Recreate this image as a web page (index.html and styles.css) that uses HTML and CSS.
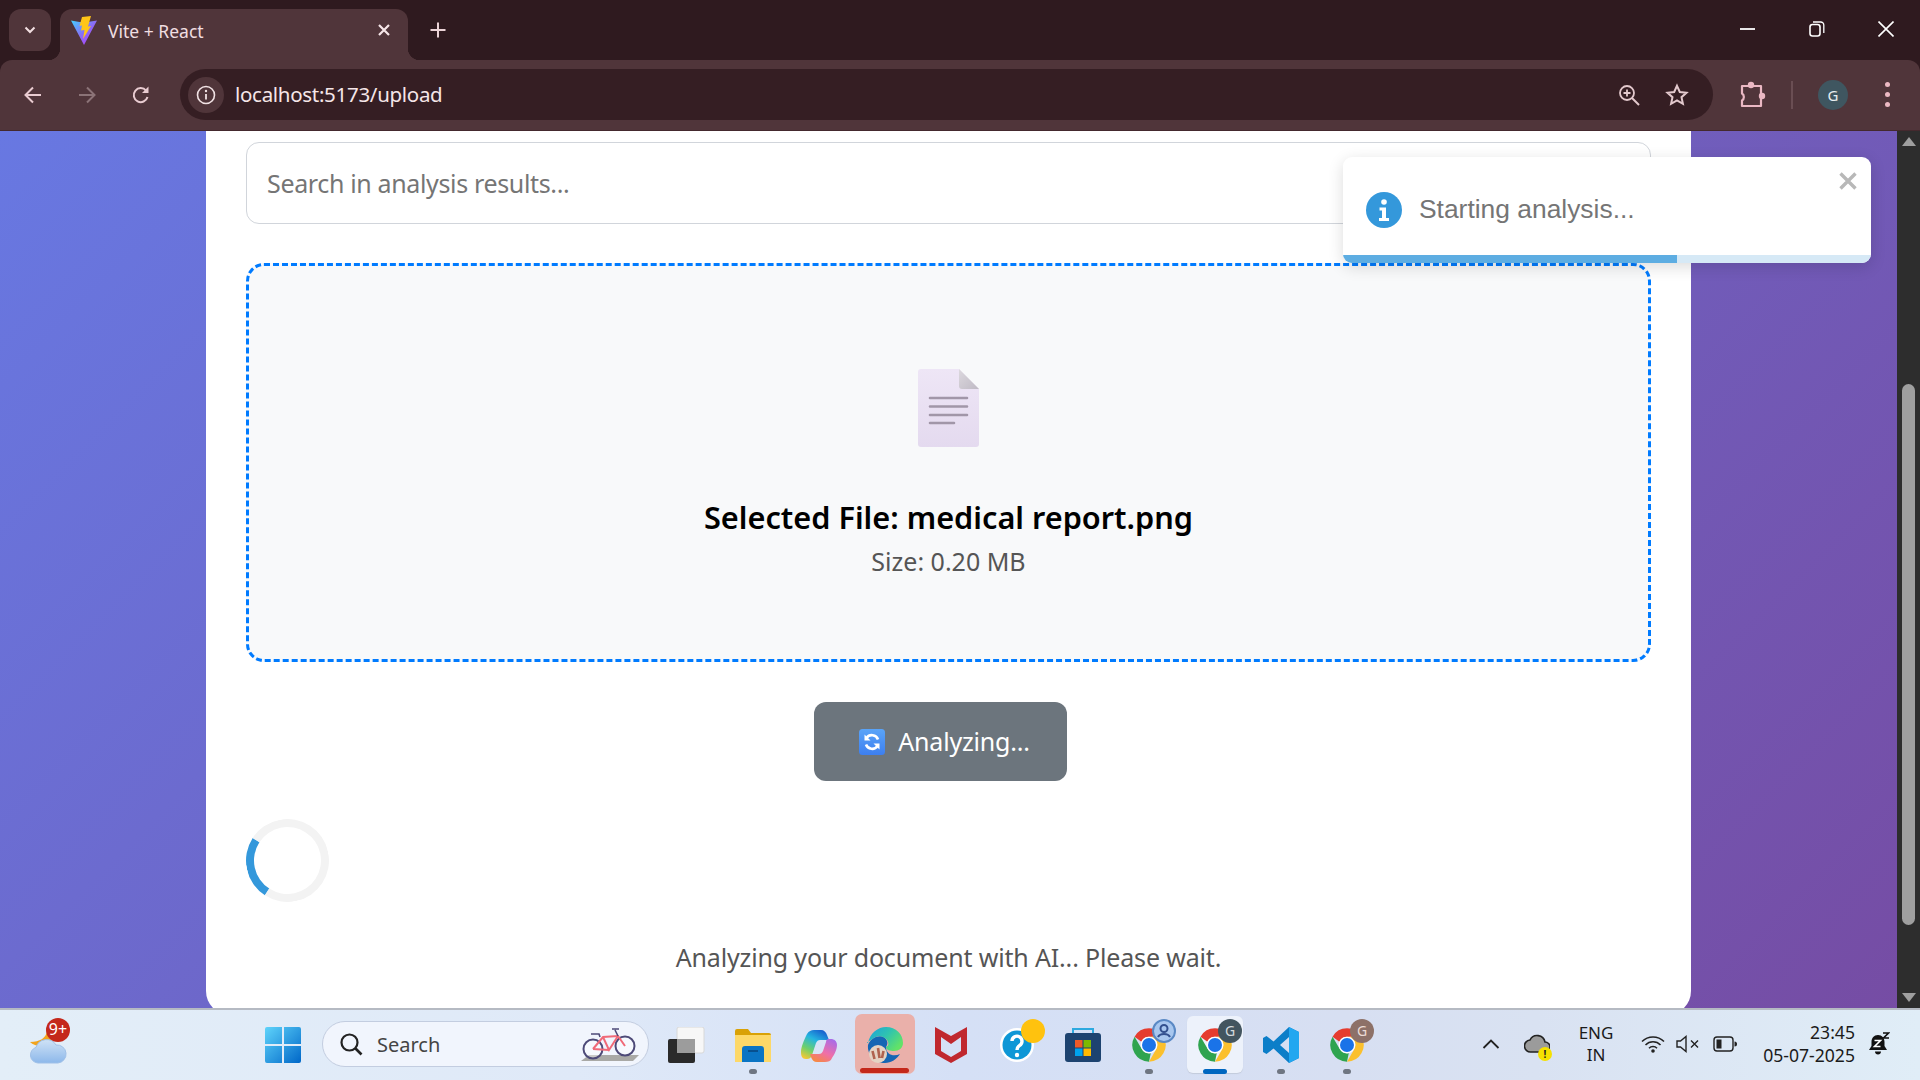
FILE: index.html
```html
<!DOCTYPE html>
<html lang="en">
<head>
<meta charset="utf-8">
<title>Vite + React</title>
<link rel="stylesheet" href="styles.css">
</head>
<body>
<svg class="sprite" width="0" height="0" aria-hidden="true">
  <symbol id="chrome" viewBox="0 0 48 48">
    <path fill="#e53c2f" d="M24 5a19 19 0 0 1 16.5 9.500H24a9.500 9.500 0 0 0-8.700 5.800L7.500 14.500A19 19 0 0 1 24 5z"/>
    <path fill="#2fa44f" d="M7.500 14.500L15.700 28.700A9.500 9.500 0 0 0 26 33.300L24 43A19 19 0 0 1 7.500 14.500z"/>
    <path fill="#fbc02d" d="M40.500 14.500A19 19 0 0 1 24 43l8.200-14.200a9.500 9.500 0 0 0 0-9.600 9.500 9.500 0 0 0-8.200-4.700z"/>
    <circle cx="24" cy="24" r="9.500" fill="#fff"/>
    <circle cx="24" cy="24" r="8" fill="#1a73e8"/>
  </symbol>
</svg>

<header class="tabstrip">
  <div class="tab-search">
    <svg width="14" height="14" viewBox="0 0 14 14"><path d="M2.500 4.500L7 9l4.500-4.500" fill="none" stroke="#f3dfe2" stroke-width="2"/></svg>
  </div>
  <div class="tab">
    <svg class="favicon" width="26" height="30" viewBox="0 0 26 30">
      <defs>
        <linearGradient id="vite" x1="0" y1="0" x2="1" y2="1"><stop offset="0" stop-color="#41d1ff"/><stop offset=".5" stop-color="#8a6cf5"/><stop offset="1" stop-color="#bd34fe"/></linearGradient>
      </defs>
      <path fill="url(#vite)" d="M0 4.500l8.500 1.500 5 0.500 12.500-2L13 29z"/>
      <path fill="#ffc517" d="M11 1l9-1-3 10.500 3-.5-8 13 1.500-9-3.500.5 1-5-2.500.5z"/>
    </svg>
    <span class="tab-title">Vite + React</span>
    <svg class="tab-close" width="14" height="14" viewBox="0 0 14 14"><path d="M2 2l10 10M12 2L2 12" stroke="#f6e6e8" stroke-width="2.200"/></svg>
  </div>
  <div class="new-tab">
    <svg width="18" height="18" viewBox="0 0 18 18"><path d="M9 1.500v15M1.500 9h15" stroke="#ecd3d7" stroke-width="2"/></svg>
  </div>
  <div class="window-controls">
    <div class="win-btn"><svg width="16" height="16" viewBox="0 0 16 16"><path d="M0 8h15" stroke="#fff" stroke-width="1.800"/></svg></div>
    <div class="win-btn"><svg width="16" height="16" viewBox="0 0 16 16"><rect x="1" y="3.500" width="10" height="11.500" rx="2.500" fill="none" stroke="#fff" stroke-width="1.600"/><path d="M4 1h7.500A3 3 0 0 1 14.800 4v8" fill="none" stroke="#fff" stroke-width="1.300"/></svg></div>
    <div class="win-btn"><svg width="16" height="16" viewBox="0 0 16 16"><path d="M0.500 0.500l15 15M15.500 0.500l-15 15" stroke="#fff" stroke-width="1.600"/></svg></div>
  </div>
</header>

<nav class="toolbar">
  <div class="nav-btn"><svg width="20" height="20" viewBox="0 0 20 20"><path d="M18 10H3M10 2.500L2.500 10l7.500 7.500" fill="none" stroke="#e9ccd1" stroke-width="2"/></svg></div>
  <div class="nav-btn"><svg width="20" height="20" viewBox="0 0 20 20"><path d="M2 10h15M10 2.500l7.500 7.500-7.500 7.500" fill="none" stroke="#8b7377" stroke-width="2"/></svg></div>
  <div class="nav-btn"><svg width="20" height="20" viewBox="0 0 20 20"><path d="M16.500 12a7 7 0 1 1-1.400-6.400" fill="none" stroke="#e9ccd1" stroke-width="2"/><path d="M17.500 1.500v6.500H11z" fill="#e9ccd1"/></svg></div>
  <div class="omnibox">
    <div class="site-chip"><svg width="20" height="20" viewBox="0 0 20 20"><circle cx="10" cy="10" r="8.500" fill="none" stroke="#f1e2e4" stroke-width="1.600"/><path d="M10 9v5.500" stroke="#f1e2e4" stroke-width="1.800"/><circle cx="10" cy="6" r="1.200" fill="#f1e2e4"/></svg></div>
    <span class="url">localhost:5173/upload</span>
    <div class="omni-btn"><svg width="22" height="22" viewBox="0 0 22 22"><circle cx="9" cy="9" r="7" fill="none" stroke="#e3c9cd" stroke-width="1.800"/><path d="M14 14l7 7" stroke="#e3c9cd" stroke-width="2"/><path d="M9 5.500v7M5.500 9h7" stroke="#e3c9cd" stroke-width="1.800"/></svg></div>
    <div class="omni-btn"><svg width="24" height="24" viewBox="0 0 24 24"><path d="M12 2.800l2.800 6.200 6.700.7-5 4.500 1.400 6.600L12 17.400l-5.900 3.400 1.400-6.600-5-4.500 6.700-.7z" fill="none" stroke="#e3c9cd" stroke-width="2"/></svg></div>
  </div>
  <div class="ext-btn"><svg width="26" height="27" viewBox="0 0 26 27"><path d="M2 5h19v20H2v-5.500c2.500-1.500 2.500-5.500 0-7z" fill="none" stroke="#eab8c3" stroke-width="2.200" stroke-linejoin="round"/><circle cx="11" cy="4" r="3.200" fill="#eab8c3"/><circle cx="22" cy="15" r="3.200" fill="#eab8c3"/></svg></div>
  <div class="tool-divider"></div>
  <div class="avatar">G</div>
  <div class="menu-btn"><span class="menu-dot"></span><span class="menu-dot"></span><span class="menu-dot"></span></div>
</nav>

<main class="viewport">
  <div class="page">
    <section class="card">
      <div class="search-box"><span class="placeholder">Search in analysis results...</span></div>
      <div class="dropzone">
        <svg class="file-icon" width="61" height="78" viewBox="0 0 61 78">
          <defs>
            <linearGradient id="paper" x1="0" y1="0" x2="0" y2="1"><stop offset="0" stop-color="#eee6f6"/><stop offset="1" stop-color="#e4daef"/></linearGradient>
            <linearGradient id="fold" x1="0" y1="0" x2="1" y2="1"><stop offset="0" stop-color="#dcd8de"/><stop offset="1" stop-color="#bfbac4"/></linearGradient>
          </defs>
          <path fill="url(#paper)" d="M3 0h38l20 20v55a3 3 0 0 1-3 3H3a3 3 0 0 1-3-3V3a3 3 0 0 1 3-3z"/>
          <path fill="url(#fold)" d="M41 0l20 20H44a3 3 0 0 1-3-3z"/>
          <path d="M12 29h37M12 37.500h37M12 46h37M12 54h24" stroke="#a196a8" stroke-width="2.600" stroke-linecap="round"/>
        </svg>
        <h3 class="file-name">Selected File: medical report.png</h3>
        <p class="file-size">Size: 0.20 MB</p>
      </div>
      <div class="action-row">
        <button class="analyze-btn" type="button">
          <svg width="26" height="26" viewBox="0 0 26 26">
            <defs><linearGradient id="emoji" x1="0" y1="0" x2="0" y2="1"><stop offset="0" stop-color="#5aa4f8"/><stop offset="1" stop-color="#3d7ff0"/></linearGradient></defs>
            <rect width="26" height="26" rx="3.500" fill="url(#emoji)"/>
            <path d="M19 10.500a6.500 6.500 0 0 0-11.500-1.500" fill="none" stroke="#fff" stroke-width="2.600"/>
            <path d="M5.500 5.500v6h6z" fill="#fff"/>
            <path d="M7 15.500a6.500 6.500 0 0 0 11.500 1.500" fill="none" stroke="#fff" stroke-width="2.600"/>
            <path d="M20.500 20.500v-6h-6z" fill="#fff"/>
          </svg>
          <span>Analyzing...</span>
        </button>
      </div>
      <div class="spinner"></div>
      <p class="status">Analyzing your document with AI... Please wait.</p>
    </section>
  </div>
  <aside class="scrollbar">
    <span class="arrow-up"></span>
    <span class="thumb"></span>
    <span class="arrow-down"></span>
  </aside>
  <div class="toast">
    <div class="toast-body">
      <svg width="36" height="36" viewBox="0 0 36 36"><circle cx="18" cy="18" r="18" fill="#3498db"/><circle cx="18" cy="10" r="2.800" fill="#fff"/><path d="M13.500 15.500h6.500v10.500h3v3h-10v-3h3v-7.500h-2.500z" fill="#fff"/></svg>
      <span class="toast-text">Starting analysis...</span>
    </div>
    <svg class="toast-close" width="20" height="20" viewBox="0 0 20 20"><path d="M2.500 2.500l15 15M17.500 2.500l-15 15" stroke="#b8b8b8" stroke-width="3.400"/></svg>
    <div class="toast-track"><div class="toast-fill"></div></div>
  </div>
</main>

<footer class="taskbar">
  <div class="weather">
    <svg width="38" height="34" viewBox="0 0 38 34">
      <defs><linearGradient id="cloud" x1="0" y1="0" x2="0" y2="1"><stop offset="0" stop-color="#cfe2f6"/><stop offset="1" stop-color="#8db8ea"/></linearGradient></defs>
      <path d="M18 1c-1 7-7 11-17 11 5 5 16 6 22 0z" fill="#f2a41d"/>
      <path d="M9 33a8 8 0 0 1-2-15.600A11 11 0 0 1 27 15a9 9 0 0 1 2 18z" fill="url(#cloud)" stroke="#9fc0e8"/>
    </svg>
    <span class="weather-badge">9+</span>
  </div>
  <div class="slot start-slot">
    <svg width="36" height="36" viewBox="0 0 36 36">
      <defs><linearGradient id="win" x1="0" y1="0" x2="1" y2="1"><stop offset="0" stop-color="#5fd4fb"/><stop offset="1" stop-color="#0067c8"/></linearGradient></defs>
      <path fill="url(#win)" d="M2 0h15v17H0V2a2 2 0 0 1 2-2zM19 0h15a2 2 0 0 1 2 2v15H19zM0 19h17v17H2a2 2 0 0 1-2-2zM19 19h17v15a2 2 0 0 1-2 2H19z"/>
    </svg>
  </div>
  <div class="task-search">
    <svg width="24" height="24" viewBox="0 0 24 24"><circle cx="10.500" cy="10.500" r="8" fill="none" stroke="#222" stroke-width="2.200"/><path d="M16.500 16.500l6 6" stroke="#222" stroke-width="2.600"/></svg>
    <span class="task-search-text">Search</span>
    <svg class="bike" width="62" height="36" viewBox="0 0 62 36">
      <path d="M2 35l8-6h50l-6 6z" fill="#a9a9a6"/>
      <circle cx="14" cy="23" r="9.500" fill="#fff" fill-opacity=".4" stroke="#4d4a78" stroke-width="2"/>
      <circle cx="46" cy="20" r="9.500" fill="#fff" fill-opacity=".4" stroke="#4d4a78" stroke-width="2"/>
      <path d="M14 23l10-12 15-1 7 10M24 11l6 13 9-14M30 24L14 23" fill="none" stroke="#f06a78" stroke-width="2"/>
      <path d="M12 8h8l1 3M36 4l3 6M33 3h7" fill="none" stroke="#4d4a78" stroke-width="1.600"/>
    </svg>
  </div>
  <div class="slot">
    <svg width="38" height="36" viewBox="0 0 38 36"><rect x="9" y="0" width="27" height="26" rx="2" fill="#f7f7f7" stroke="#d8d8d8"/><rect x="0" y="12" width="27" height="24" rx="2" fill="#2a2a2a"/><rect x="9" y="12" width="18" height="14" fill="#9c9c9c"/></svg>
  </div>
  <div class="slot">
    <svg width="36" height="34" viewBox="0 0 36 34"><path d="M0 3a2 2 0 0 1 2-2h11l3 4h18a2 2 0 0 1 2 2v4H0z" fill="#d9a106"/><path d="M0 7h36v27H0z" fill="#fdd868"/><path d="M7 34V21a3 3 0 0 1 3-3h16a3 3 0 0 1 3 3v13z" fill="#0a74c4"/><path d="M13 23h10" stroke="#07508f" stroke-width="2"/></svg>
    <span class="dot"></span>
  </div>
  <div class="slot">
    <svg width="36" height="33" viewBox="0 0 36 33">
      <defs>
        <linearGradient id="cop1" x1="0.700" y1="0" x2="0.200" y2="1"><stop offset="0" stop-color="#1762cf"/><stop offset=".35" stop-color="#25b5e0"/><stop offset=".7" stop-color="#6fd06a"/><stop offset="1" stop-color="#f2c834"/></linearGradient>
        <linearGradient id="cop2" x1="0.800" y1="0" x2="0.200" y2="1"><stop offset="0" stop-color="#a86be8"/><stop offset=".55" stop-color="#ef6fa8"/><stop offset="1" stop-color="#f68a3c"/></linearGradient>
      </defs>
      <path d="M13 1h7c3 0 5 2 6 5l2 5h-9c-2 0-3 1-4 3l-4 12c-1 3-3 4-5 4H5c-4 0-5-3-5-7 0-5 3-12 6-18 2-3 4-4 7-4z" fill="url(#cop1)"/>
      <path d="M28 10h2c3 0 6 2 6 6 0 5-3 10-5 13-1 3-4 4-7 4h-8c-3 0-5-2-6-5l-1-3h9c2 0 3-1 4-3l3-9c0-2 1-3 3-3z" fill="url(#cop2)"/>
    </svg>
  </div>
  <div class="slot slot-alert">
    <svg width="36" height="36" viewBox="0 0 36 36">
      <defs><linearGradient id="edge" x1="0" y1="0" x2="1" y2="0.600"><stop offset="0" stop-color="#1b9de2"/><stop offset=".55" stop-color="#2fc3b0"/><stop offset="1" stop-color="#62e268"/></linearGradient></defs>
      <path d="M1 18C4 10 13 7 18 11c3 3 3 6 1 9 0 8 8 10 14 7-3 5-9 9-15 9C8 36 0 28 1 18z" fill="#1566b4"/>
      <path d="M1 16C3 6 11 0 19 0c10 0 17 7 17 16 0 5-4 8-9 8-4 0-8-1-8-4 3-1 3-4 1-7-3-4-9-5-13-2-3 2-6 4-8 5z" fill="url(#edge)"/>
      <circle cx="11" cy="27" r="9" fill="#e4d3c4"/>
      <path d="M5.500 24l2 8M11 21l1.500 10M16.500 24l-1.500 7" stroke="#b0634f" stroke-width="2.600"/>
    </svg>
    <span class="alert-bar"></span>
  </div>
  <div class="slot">
    <svg width="32" height="36" viewBox="0 0 32 36"><path d="M0 0l16 9 16-9v27L16 36 0 27zM6 10v14l10 6 10-6V10L16 17z" fill="#c0282e" fill-rule="evenodd"/></svg>
  </div>
  <div class="slot">
    <svg width="34" height="34" viewBox="0 0 34 34"><circle cx="17" cy="17" r="17" fill="#fff"/><circle cx="17" cy="17" r="14.500" fill="#0e97d6"/><path d="M12 13a5 5 0 1 1 7.500 4.500C17.500 19 17 20 17 22" fill="none" stroke="#fff" stroke-width="3.400"/><circle cx="17" cy="27" r="2.200" fill="#fff"/></svg>
    <span class="help-dot"></span>
  </div>
  <div class="slot">
    <svg width="36" height="34" viewBox="0 0 36 34">
      <path d="M8 7V1h20v6" fill="none" stroke="#2ea9df" stroke-width="2"/>
      <rect y="5" width="36" height="29" rx="3" fill="#1d4370"/>
      <rect x="10" y="12" width="7.500" height="7.500" fill="#f05a28"/><rect x="18.500" y="12" width="7.500" height="7.500" fill="#7db900"/><rect x="10" y="20.500" width="7.500" height="7.500" fill="#00a2ed"/><rect x="18.500" y="20.500" width="7.500" height="7.500" fill="#ffb900"/>
    </svg>
  </div>
  <div class="slot">
    <svg class="chrome-icon"><use href="#chrome"/></svg>
    <span class="badge badge-photo">
      <svg width="24" height="24" viewBox="0 0 24 24"><circle cx="12" cy="12" r="11" fill="#a8c7ef" stroke="#5a89c5" stroke-width="2"/><circle cx="12" cy="9.500" r="3.500" fill="none" stroke="#33518f" stroke-width="2"/><path d="M6 18c2-4 10-4 12 0" fill="none" stroke="#33518f" stroke-width="2"/></svg>
    </span>
    <span class="dot"></span>
  </div>
  <div class="slot slot-current">
    <svg class="chrome-icon"><use href="#chrome"/></svg>
    <span class="badge badge-slate">G</span>
    <span class="current-bar"></span>
  </div>
  <div class="slot">
    <svg width="36" height="36" viewBox="0 0 36 36"><path d="M26 0l10 5v26l-10 5L10.500 21.500 3.500 27 0 25V11l3.500-2 7 5.500zM26 10l-9 8 9 8z" fill="#0c7ec8" fill-rule="evenodd"/><path d="M26 0l10 5v26l-10 5z" fill="#22a7f0"/></svg>
    <span class="dot"></span>
  </div>
  <div class="slot">
    <svg class="chrome-icon"><use href="#chrome"/></svg>
    <span class="badge badge-brown">G</span>
    <span class="dot"></span>
  </div>
  <div class="task-spacer"></div>
  <div class="tray-chevron"><svg width="18" height="12" viewBox="0 0 18 12"><path d="M1.500 10L9 2.500 16.500 10" fill="none" stroke="#222" stroke-width="1.800"/></svg></div>
  <div class="tray-cloud">
    <svg width="26" height="20" viewBox="0 0 26 20"><path d="M7 18a6 6 0 0 1-1-12 8 8 0 0 1 15 2 5 5 0 0 1 0 10z" fill="#9b9b9b" stroke="#222" stroke-width="1.600"/></svg>
    <span class="tray-warn">!</span>
  </div>
  <div class="tray-lang"><span>ENG</span><span>IN</span></div>
  <div class="tray-wifi"><svg width="24" height="18" viewBox="0 0 24 18"><path d="M1 6.500a15.500 15.500 0 0 1 22 0M4.500 10a10.500 10.500 0 0 1 15 0M8 13.200a5.500 5.500 0 0 1 8 0" fill="none" stroke="#222" stroke-width="1.500"/><circle cx="12" cy="16" r="1.800" fill="#222"/></svg></div>
  <div class="tray-sound"><svg width="24" height="18" viewBox="0 0 24 18"><path d="M1 6h3.500L10 1.500v15L4.500 12H1z" fill="none" stroke="#222" stroke-width="1.400"/><path d="M15 5.500l7 7M22 5.500l-7 7" stroke="#222" stroke-width="1.400"/></svg></div>
  <div class="tray-battery"><svg width="24" height="16" viewBox="0 0 24 16"><rect x="1" y="1" width="19" height="14" rx="3" fill="none" stroke="#222" stroke-width="1.400"/><rect x="3.500" y="3.500" width="5" height="9" fill="#222"/><path d="M21.500 5.500a2.500 2.500 0 0 1 0 5z" fill="#222"/></svg></div>
  <div class="tray-clock"><span>23:45</span><span>05-07-2025</span></div>
  <div class="tray-bell"><svg width="22" height="24" viewBox="0 0 22 24"><path d="M10 3C6 3 3.500 6 3.500 10v4L1 18h18l-2.500-4v-4C16.500 6 14 3 10 3z" fill="#111"/><path d="M7 19.500h6c0 2-1.300 3-3 3s-3-1-3-3z" fill="#111"/><path d="M6.500 8.500h6l-6 6h6" fill="none" stroke="#fff" stroke-width="1.600"/><path d="M15 1h5.500l-5 5h5.500" fill="none" stroke="#111" stroke-width="1.600"/></svg></div>
</footer>
</body>
</html>
```

FILE: styles.css
```css
* { box-sizing: border-box; }

html, body { height: 100%; }

body {
  margin: 0;
  height: 100vh;
  overflow: hidden;
  display: flex;
  flex-direction: column;
  background: #2f1a1f;
  font-family: "Noto Sans", "Open Sans", sans-serif;
}

.sprite { position: absolute; }

/* tab strip */
.tabstrip {
  height: 60px;
  flex: none;
  display: flex;
  background: #2f1a1f;
}

.tab-search {
  width: 42px;
  height: 42px;
  margin: 9px 0 0 9px;
  border-radius: 12px;
  background: #50353a;
  display: flex;
  align-items: center;
  justify-content: center;
}

.tab {
  position: relative;
  width: 348px;
  height: 51px;
  margin: 9px 0 0 9px;
  padding: 0 17px 0 8px;
  border-radius: 12px 12px 0 0;
  background: #50353a;
  display: flex;
  align-items: flex-start;
}

.tab::before,
.tab::after {
  content: "";
  position: absolute;
  bottom: 0;
  width: 12px;
  height: 12px;
}

.tab::before {
  left: -12px;
  background: radial-gradient(circle at 0 0, transparent 12px, #50353a 12.500px);
}

.tab::after {
  right: -12px;
  background: radial-gradient(circle at 100% 0, transparent 12px, #50353a 12.500px);
}

.favicon { margin: 7px 11px 0 3px; flex: none; }

.tab-title {
  flex: 1;
  margin-top: 11px;
  font-size: 17.500px;
  line-height: 23px;
  color: #f0dee1;
}

.tab-close { margin-top: 14px; }

.new-tab {
  width: 30px;
  height: 30px;
  margin: 15px 0 0 15px;
  display: flex;
  align-items: center;
  justify-content: center;
}

.window-controls { margin-left: auto; display: flex; }

.win-btn {
  width: 69px;
  height: 60px;
  padding-bottom: 2px;
  display: flex;
  align-items: center;
  justify-content: center;
}

/* toolbar */
.toolbar {
  height: 71px;
  flex: none;
  padding-left: 6px;
  display: flex;
  align-items: center;
  padding-bottom: 1px;
  background: #50353a;
  border-bottom: 1px solid #44292e;
  border-radius: 12px 12px 0 0;
}

.nav-btn {
  width: 54px;
  height: 48px;
  display: flex;
  align-items: center;
  justify-content: center;
}

.omnibox {
  width: 1533px;
  height: 51px;
  margin-left: 12px;
  padding: 0 12px 0 8px;
  border-radius: 26px;
  background: #351e23;
  display: flex;
  align-items: center;
}

.site-chip {
  width: 36px;
  height: 36px;
  flex: none;
  border-radius: 50%;
  background: #50353a;
  display: flex;
  align-items: center;
  justify-content: center;
}

.url {
  flex: 1;
  margin: 0 0 2px 11px;
  font-size: 20.500px;
  letter-spacing: -0.3px;
  color: #f5e6e8;
}

.omni-btn {
  width: 48px;
  height: 48px;
  display: flex;
  align-items: center;
  justify-content: center;
}

.ext-btn {
  width: 48px;
  margin-left: 16px;
  display: flex;
  justify-content: center;
}

.tool-divider {
  width: 2px;
  height: 28px;
  margin-left: 14px;
  background: #6a4e53;
}

.avatar {
  width: 30px;
  height: 30px;
  margin-left: 25px;
  border-radius: 50%;
  background: #3f5660;
  color: #e8eef0;
  font-size: 15px;
  line-height: 30px;
  text-align: center;
}

.menu-btn {
  width: 48px;
  margin-left: 15px;
  display: flex;
  flex-direction: column;
  align-items: center;
  gap: 5px;
}

.menu-dot {
  width: 5px;
  height: 5px;
  border-radius: 50%;
  background: #ecb9c3;
}

/* page */
.viewport {
  position: relative;
  flex: 1;
  min-height: 0;
  display: flex;
  overflow: hidden;
}

.page {
  flex: 1;
  min-width: 0;
  padding: 0 206px;
  background-image: linear-gradient(135deg, #667eea, #764ba2);
  background-size: 1897px 1345px;
  background-position: 0 -374px;
}

.card {
  height: 884px;
  padding: 11px 40px 0 40px;
  border-radius: 0 0 24px 24px;
  background: #fff;
}

.search-box {
  height: 82px;
  padding: 0 20px;
  border: 1px solid #d1d5db;
  border-radius: 13px;
  display: flex;
  align-items: center;
}

.placeholder {
  font-size: 25px;
  letter-spacing: -0.35px;
  color: #757575;
}

.dropzone {
  height: 399px;
  margin-top: 39px;
  padding-top: 103px;
  border: 3px dashed #007bff;
  border-radius: 18px;
  background: #f8f9fa;
  display: flex;
  flex-direction: column;
  align-items: center;
}

.file-icon { flex: none; }

.file-name {
  margin: 48px 0 0;
  font-size: 30.700px;
  line-height: 44px;
  font-weight: 600;
  color: #000;
}

.file-size {
  margin: 4px 0 0;
  font-size: 25px;
  line-height: 36px;
  color: #555;
}

.action-row {
  margin-top: 40px;
  padding-right: 16px;
  display: flex;
  justify-content: center;
}

.analyze-btn {
  width: 253px;
  height: 79px;
  padding: 0 0 0 8px;
  border: 0;
  border-radius: 12px;
  background: #6c757d;
  color: #fff;
  font: inherit;
  font-size: 25px;
  letter-spacing: -0.2px;
  display: flex;
  align-items: center;
  justify-content: center;
  gap: 13px;
}

.analyze-btn span { margin-bottom: 2px; }

.spinner {
  width: 83px;
  height: 83px;
  margin-top: 38px;
  border: 8px solid #f3f3f3;
  border-top-color: #3498db;
  border-radius: 50%;
  transform: rotate(258deg);
}

.status {
  margin: 37px 0 0;
  font-size: 25px;
  line-height: 36px;
  letter-spacing: -0.16px;
  text-align: center;
  color: #555;
}

/* scrollbar */
.scrollbar {
  position: relative;
  width: 23px;
  flex: none;
  background: #2d2d2d;
}

.thumb {
  position: absolute;
  left: 5px;
  top: 253px;
  width: 13px;
  height: 541px;
  border-radius: 7px;
  background: #9f9f9f;
}

.arrow-up,
.arrow-down {
  position: absolute;
  left: 5px;
  width: 0;
  height: 0;
  border-left: 7px solid transparent;
  border-right: 7px solid transparent;
}

.arrow-up { top: 6px; border-bottom: 9px solid #9f9f9f; }
.arrow-down { bottom: 6px; border-top: 9px solid #9f9f9f; }

/* toast */
.toast {
  position: absolute;
  left: 1343px;
  top: 26px;
  width: 528px;
  height: 106px;
  border-radius: 9px;
  overflow: hidden;
  background: #fff;
  box-shadow: 0 4px 16px rgba(0, 0, 0, 0.14);
}

.toast-body {
  height: 98px;
  padding: 7px 0 0 23px;
  display: flex;
  align-items: center;
  gap: 17px;
}

.toast-text {
  font-family: "Liberation Sans", Arial, sans-serif;
  font-size: 26.400px;
  color: #757575;
}

.toast-close {
  position: absolute;
  right: 13px;
  top: 14px;
}

.toast-track {
  height: 8px;
  background: #d6e9f6;
}

.toast-fill {
  width: 334px;
  height: 100%;
  background: #5dade2;
}

/* taskbar */
.taskbar {
  height: 72px;
  flex: none;
  display: flex;
  border-top: 2px solid #b5bac3;
  background: linear-gradient(90deg, #e3eef8 0%, #dfe9f8 30%, #d5e0f6 50%, #d7dff2 70%, #d9e2f2 80%, #e0edf7 100%);
}

.weather {
  position: relative;
  width: 96px;
  margin-right: 154px;
  display: flex;
  align-items: center;
  justify-content: center;
  padding: 4px 0 0;
}

.weather-badge {
  position: absolute;
  left: 46px;
  top: 8px;
  width: 24px;
  height: 24px;
  border-radius: 50%;
  background: #c4281b;
  color: #fff;
  font-size: 16px;
  line-height: 23px;
  text-align: center;
}

.slot {
  position: relative;
  width: 66px;
  height: 70px;
  flex: none;
  display: flex;
  align-items: center;
  justify-content: center;
}

.task-search {
  width: 327px;
  height: 46px;
  margin: 11px 5px 0 6px;
  padding: 0 7px 0 16px;
  border: 1px solid #c3cde0;
  border-radius: 23px;
  background: #f1f5fd;
  display: flex;
  align-items: center;
}

.task-search-text {
  flex: 1;
  margin-left: 14px;
  font-size: 20px;
  color: #444;
}

.bike { flex: none; }

.dot {
  position: absolute;
  left: 29px;
  bottom: 6px;
  width: 8px;
  height: 5px;
  border-radius: 3px;
  background: #6f7682;
}

.slot-alert::before {
  content: "";
  position: absolute;
  left: 3px;
  top: 4px;
  width: 60px;
  height: 60px;
  border-radius: 7px;
  background: #eab0aa;
}

.slot-alert svg { position: relative; }

.alert-bar {
  position: absolute;
  left: 8px;
  top: 58px;
  width: 49px;
  height: 5px;
  border-radius: 3px;
  background: #c4281b;
}

.help-dot {
  position: absolute;
  left: 37px;
  top: 9px;
  width: 24px;
  height: 24px;
  border-radius: 50%;
  background: #ffc20e;
}

.chrome-icon { width: 42px; height: 42px; }

.slot-current::before {
  content: "";
  position: absolute;
  left: 5px;
  top: 6px;
  width: 56px;
  height: 57px;
  border-radius: 6px;
  background: #edf2fb;
  box-shadow: 0 1px 1px #c3cbdb;
}

.slot-current svg { position: relative; }

.current-bar {
  position: absolute;
  left: 21px;
  bottom: 6px;
  width: 24px;
  height: 5px;
  border-radius: 3px;
  background: #0067c0;
}

.badge {
  position: absolute;
  left: 36px;
  top: 9px;
  width: 24px;
  height: 24px;
  border-radius: 50%;
  font-size: 14px;
  line-height: 24px;
  text-align: center;
  color: #d5dadd;
}

.badge-slate { background: #43555f; }
.badge-brown { background: #8d7168; color: #ecdcd6; }

.task-spacer { flex: 1; }

.tray-chevron,
.tray-cloud,
.tray-wifi,
.tray-sound,
.tray-battery,
.tray-bell {
  position: relative;
  display: flex;
  align-items: center;
  justify-content: center;
  padding-bottom: 2px;
}

.tray-chevron { width: 46px; }
.tray-cloud { width: 46px; }

.tray-warn {
  position: absolute;
  left: 24px;
  top: 37px;
  width: 14px;
  height: 14px;
  border-radius: 50%;
  background: #f5e100;
  color: #222;
  font-size: 10px;
  font-weight: 700;
  line-height: 14px;
  text-align: center;
}

.tray-lang {
  width: 72px;
  display: flex;
  flex-direction: column;
  align-items: center;
  justify-content: center;
  font-size: 17px;
  line-height: 22.500px;
  color: #1b1b1b;
  padding-bottom: 2px;
}

.tray-wifi { width: 42px; }
.tray-sound { width: 28px; }
.tray-battery { width: 46px; }

.tray-clock {
  width: 107px;
  display: flex;
  flex-direction: column;
  align-items: flex-end;
  justify-content: center;
  font-size: 17.600px;
  line-height: 23px;
  color: #1b1b1b;
  padding-bottom: 2px;
}

.tray-bell { width: 47px; margin-right: 18px; }
```
